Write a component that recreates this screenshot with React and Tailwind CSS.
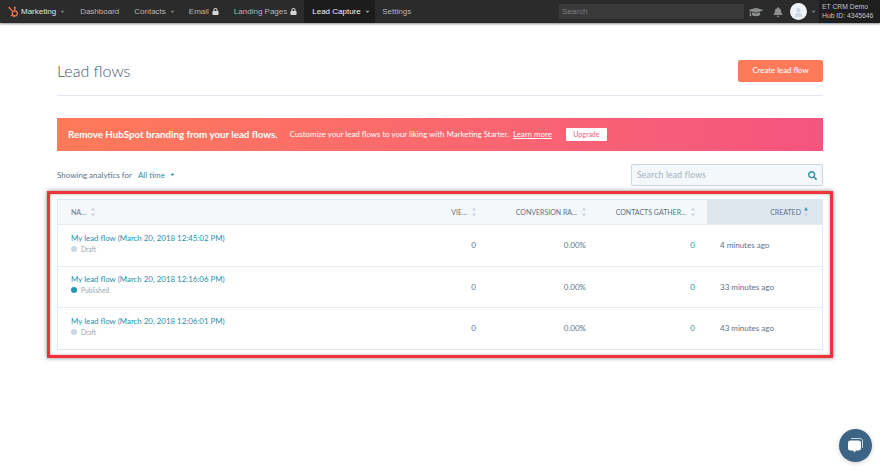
import { FaBell, FaGraduationCap, FaLock, FaSearch, FaCaretDown } from "react-icons/fa";

const flows = [
  { name: "My lead flow (March 20, 2018 12:45:02 PM)", status: "Draft", created: "4 minutes ago" },
  { name: "My lead flow (March 20, 2018 12:16:06 PM)", status: "Published", created: "33 minutes ago" },
  { name: "My lead flow (March 20, 2018 12:06:01 PM)", status: "Draft", created: "43 minutes ago" },
];

const gridCols = "grid grid-cols-[379px_54px_110px_106px_1fr]";

function Sprocket() {
  return (
    <svg width="11" height="12" viewBox="0 0 11 12" fill="none" stroke="#f2734c" strokeWidth="1.3">
      <circle cx="6.8" cy="7.4" r="2.5" />
      <path d="M1.2 1.6 5 5.6M6.8 4.8V2M6.8 9.9 5.2 11M4.6 8.8 3 10" />
      <circle cx="1.3" cy="1.6" r="0.9" fill="#f2734c" stroke="none" />
      <circle cx="6.8" cy="1.6" r="1" fill="#f2734c" stroke="none" />
    </svg>
  );
}

function Caret({ color = "text-[#77797c]" }) {
  return <FaCaretDown className={`ml-[3px] text-[7px] ${color}`} />;
}

function Sort({ active, tight }) {
  return (
    <svg width="4" height="10" viewBox="0 0 5 10" preserveAspectRatio="none" className={`shrink-0 ${tight ? "ml-[3px]" : "ml-[5px]"}`}>
      <path d="M2.5 0 5 3.5H0Z" fill={active ? "#2e9fb6" : "#cbd6e2"} />
      <path d="M2.5 10 0 6.5H5Z" fill="#cbd6e2" />
    </svg>
  );
}

function TopNav() {
  return (
    <nav className="flex h-[23px] items-center bg-[#2b2b2b] text-[8px] text-[#b5b7b9] shadow-[0_1px_2px_rgba(0,0,0,0.45)] font-['Liberation_Sans',sans-serif]">
      <div className="ml-[8px] flex items-center">
        <Sprocket />
        <span className="ml-[2px] text-[#e4e4e4]">Marketing</span>
        <Caret />
      </div>
      <span className="ml-[14px]">Dashboard</span>
      <div className="ml-[15px] flex items-center">
        Contacts
        <Caret />
      </div>
      <div className="ml-[13px] flex items-center">
        Email
        <FaLock className="ml-[3px] text-[7px] text-[#d5d6d7]" />
      </div>
      <div className="ml-[15px] flex items-center">
        Landing Pages
        <FaLock className="ml-[3px] text-[7px] text-[#d5d6d7]" />
      </div>
      <div className="ml-[7px] flex h-full w-[71px] items-center bg-[#1c1c1c] pl-[8px] text-[#f0f0f0]">
        Lead Capture
        <Caret color="text-[#9a9a9a]" />
      </div>
      <span className="ml-[7px]">Settings</span>
      <div className="ml-auto flex h-full items-center">
        <div className="flex h-[15px] w-[185px] items-center bg-[#3a3a3a] pl-[3px] text-[#7c7d7e]">Search</div>
        <FaGraduationCap className="ml-[5px] text-[14px] text-[#8c8d8e]" />
        <FaBell className="ml-[10px] text-[10px] text-[#8c8d8e]" />
        <div className="ml-[7px] flex h-[17px] w-[17px] items-center justify-center rounded-full bg-[#f1f4f6]">
          <svg width="9" height="10" viewBox="0 0 9 10" fill="#c7d9e4">
            <circle cx="4.5" cy="3" r="2.2" />
            <path d="M.8 10c0-3 1.6-4.2 3.7-4.2S8.2 7 8.2 10Z" />
          </svg>
        </div>
        <Caret />
        <div className="ml-[2px] flex h-full w-[61px] flex-col justify-center bg-[#1e1e1e] pb-[1px] pl-[3px] text-[6.8px] leading-[9px] text-[#c4c5c6]">
          <span>ET CRM Demo</span>
          <span>Hub ID: 4345646</span>
        </div>
      </div>
    </nav>
  );
}

function FlowRow({ flow }) {
  const published = flow.status === "Published";
  return (
    <div className={`${gridCols} h-[41.5px] items-center border-t border-[#e5ecf3] text-[8px] text-[#5b7288]`}>
      <div className="pb-[4px] pl-[13px]">
        <div className="text-[7.9px] leading-[11px] text-[#2b8fa8]">{flow.name}</div>
        <div className="flex items-center text-[6.6px] leading-[10px] text-[#9aa8b6]">
          <span className={`mr-[4px] h-[6px] w-[6px] rounded-full ${published ? "bg-[#1f97ad]" : "bg-[#cbd6e2]"}`} />
          {flow.status}
        </div>
      </div>
      <div className="pr-[15px] text-right">0</div>
      <div className="pr-[15px] text-right">0.00%</div>
      <div className="pr-[12px] text-right text-[#2b8fa8]">0</div>
      <div className="pl-[13px]">{flow.created}</div>
    </div>
  );
}

export default function App() {
  return (
    <div className="relative h-[470px] w-[880px] overflow-hidden bg-white font-['Lato',sans-serif]">
      <TopNav />
      <main className="mx-[57px] flex flex-col">
        <div className="flex h-[73px] items-center justify-between border-b border-[#dfe7f1] pt-[25px] pb-[1px]">
          <h1 className="text-[16px] font-light text-[#44586c]">Lead flows</h1>
          <button className="flex h-[22px] w-[85px] items-center justify-center rounded-[2px] bg-[#ff7a59] text-[7.8px] font-medium text-white">
            Create lead flow
          </button>
        </div>

        <div className="mt-[22px] flex h-[33px] items-center bg-gradient-to-r from-[#ff7a59] to-[#f5547f] pl-[11px] text-[7.9px] text-white">
          <span className="text-[9.75px] font-bold">Remove HubSpot branding from your lead flows.</span>
          <span className="ml-[12px]">Customize your lead flows to your liking with Marketing Starter.</span>
          <span className="ml-[4px] underline">Learn more</span>
          <button className="ml-[14px] h-[13px] w-[41px] rounded-[1px] bg-white text-[7px] text-[#f2617a]">Upgrade</button>
        </div>

        <div className="mt-[12px] flex h-[23px] items-center justify-between">
          <div className="flex items-center text-[8px] text-[#5b7288]">
            Showing analytics for
            <span className="ml-[6px] text-[#2b8fa8]">All time</span>
            <FaCaretDown className="ml-[4px] text-[7px] text-[#2b8fa8]" />
          </div>
          <div className="flex h-[22px] w-[192px] items-center justify-between rounded-[2px] border border-[#cbd6e2] bg-[#f5f8fa] pl-[5px] pr-[5px] pt-[1px] text-[8.6px] tracking-[0.2px] text-[#a0b0bf]">
            Search lead flows
            <FaSearch className="text-[9px] text-[#2b8fa8]" />
          </div>
        </div>

        <div className="-mx-[10px] mt-[5px] border-[3px] border-[#f0333b] px-[7px] py-[5px] shadow-[0_0_4px_rgba(0,0,0,0.5),inset_0_0_3px_rgba(0,0,0,0.35)]">
          <div className="border border-[#dfe7f1]">
            <div className={`${gridCols} h-[24px] items-center bg-[#f5f8fa] text-[7px] text-[#5b7288]`}>
              <div className="flex items-center pl-[13px]">NA...<Sort /></div>
              <div className="flex items-center justify-end pr-[15px]">VIE...<Sort /></div>
              <div className="flex items-center justify-end pr-[15px]">CONVERSION RA...<Sort /></div>
              <div className="flex items-center justify-end pr-[12px]">CONTACTS GATHER...<Sort /></div>
              <div className="flex h-full items-center justify-end bg-[#dfe7ee] pr-[14px]">CREATED<Sort active tight /></div>
            </div>
            {flows.map((flow) => (
              <FlowRow key={flow.name} flow={flow} />
            ))}
          </div>
        </div>
      </main>

      <button className="absolute bottom-[8px] right-[8px] flex h-[33px] w-[33px] items-center justify-center rounded-full bg-[#3d6485] shadow-[0_1px_4px_rgba(0,0,0,0.2)]">
        <svg width="17" height="17" viewBox="0 0 17 17">
          <path d="M4 1.5h9a2.5 2.5 0 0 1 2.5 2.5v7" fill="none" stroke="#c9d6e0" strokeWidth="1" />
          <path d="M3.5 3.5h8A2.5 2.5 0 0 1 14 6v5a2.5 2.5 0 0 1-2.5 2.5H9l-1.5 2-1.5-2H3.5A2.5 2.5 0 0 1 1 11V6a2.5 2.5 0 0 1 2.5-2.5Z" fill="#fff" />
        </svg>
      </button>
    </div>
  );
}
